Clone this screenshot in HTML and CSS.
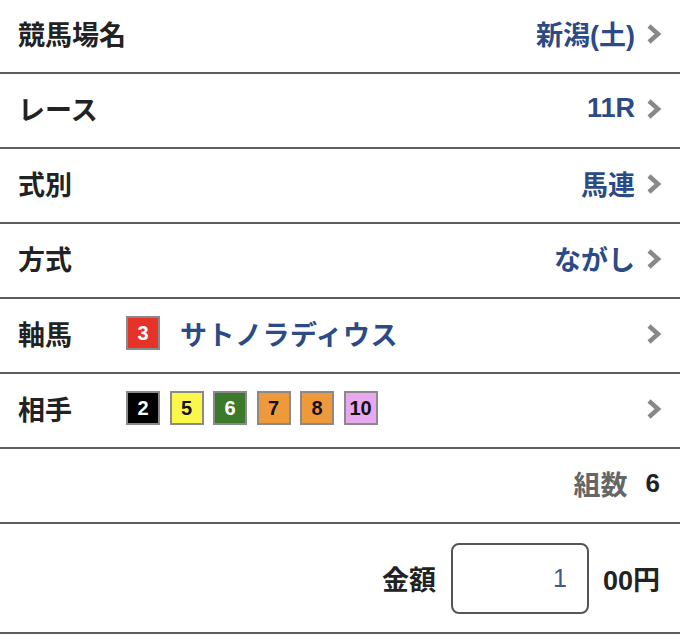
FILE: index.html
```html
<!DOCTYPE html>
<html lang="ja">
<head>
<meta charset="utf-8">
<link rel="stylesheet" href="styles.css">
</head>
<body>
<div class="list">
  <div class="row">
    <span class="label">競馬場名</span>
    <span class="value">新潟(土)</span>
    <svg class="chev" viewBox="0 0 16 22"><polyline points="3,3 12,11 3,19"/></svg>
  </div>
  <div class="row">
    <span class="label">レース</span>
    <span class="value">11R</span>
    <svg class="chev" viewBox="0 0 16 22"><polyline points="3,3 12,11 3,19"/></svg>
  </div>
  <div class="row">
    <span class="label">式別</span>
    <span class="value">馬連</span>
    <svg class="chev" viewBox="0 0 16 22"><polyline points="3,3 12,11 3,19"/></svg>
  </div>
  <div class="row">
    <span class="label">方式</span>
    <span class="value">ながし</span>
    <svg class="chev" viewBox="0 0 16 22"><polyline points="3,3 12,11 3,19"/></svg>
  </div>
  <div class="row">
    <span class="label label-fixed">軸馬</span>
    <div class="horses">
      <span class="badge b-red">3</span>
      <span class="horse-name">サトノラディウス</span>
    </div>
    <svg class="chev" viewBox="0 0 16 22"><polyline points="3,3 12,11 3,19"/></svg>
  </div>
  <div class="row">
    <span class="label label-fixed">相手</span>
    <div class="horses badges">
      <span class="badge b-black">2</span>
      <span class="badge b-yellow">5</span>
      <span class="badge b-green">6</span>
      <span class="badge b-orange">7</span>
      <span class="badge b-orange">8</span>
      <span class="badge b-pink">10</span>
    </div>
    <svg class="chev" viewBox="0 0 16 22"><polyline points="3,3 12,11 3,19"/></svg>
  </div>
  <div class="row row-end">
    <span class="count-label">組数</span>
    <span class="count">6</span>
  </div>
  <div class="row row-amount">
    <span class="amount-label">金額</span>
    <div class="amount-box">1</div>
    <span class="unit">00円</span>
  </div>
</div>
</body>
</html>
```
FILE: styles.css
```css
* { box-sizing: border-box; }
html, body {
  margin: 0;
  padding: 0;
  background: #fff;
}
body {
  font-family: "Liberation Sans", "Noto Sans CJK JP", sans-serif;
  color: #222;
  width: 680px;
  height: 640px;
  overflow: hidden;
}
.list {
  margin-top: -1px;
}
.row {
  display: flex;
  align-items: center;
  height: 75px;
  padding: 0 18px 5px 18px;
  border-bottom: 2px solid #5e5e5e;
}
.label {
  font-size: 27px;
  font-weight: bold;
  color: #222;
  flex: 1;
}
.label-fixed {
  flex: 0 0 108px;
}
.value {
  font-size: 27px;
  font-weight: bold;
  color: #2c4a85;
  margin-right: 11px;
}
.chev {
  width: 16px;
  height: 22px;
  flex: none;
  margin-top: 2px;
}
.chev polyline {
  fill: none;
  stroke: #888;
  stroke-width: 4.5;
  stroke-linecap: butt;
  stroke-linejoin: miter;
}
.horses {
  flex: 1;
  display: flex;
  align-items: center;
  gap: 20px;
}
.badges {
  gap: 9.5px;
}
.badge {
  width: 34px;
  height: 34px;
  border: 2px solid #8a8a8a;
  display: flex;
  align-items: center;
  justify-content: center;
  font-size: 20px;
  font-weight: bold;
  color: #fff;
  flex: none;
}
.b-red { background: #e5332a; }
.b-black { background: #000; }
.b-yellow { background: #fbf74a; color: #111; }
.b-green { background: #3a7a2a; }
.b-orange { background: #ee9a3c; color: #111; }
.b-pink { background: #e8a8ee; color: #111; }
.horse-name {
  font-size: 27px;
  font-weight: bold;
  color: #2c4a85;
  letter-spacing: 0.5px;
}
.row-end {
  justify-content: flex-end;
  padding-right: 20px;
}
.count-label {
  font-size: 27px;
  font-weight: bold;
  color: #666;
  margin-right: 18px;
}
.count {
  font-size: 26px;
  font-weight: bold;
  color: #222;
}
.row-amount {
  height: 110px;
  justify-content: flex-end;
  padding: 0 20px 0 18px;
}
.amount-label {
  font-size: 27px;
  font-weight: bold;
  color: #222;
  margin-right: 15px;
}
.amount-box {
  width: 138px;
  height: 71px;
  border: 2px solid #555;
  border-radius: 8px;
  display: flex;
  align-items: center;
  justify-content: flex-end;
  padding-right: 20px;
  font-size: 25px;
  color: #3b5a8f;
  margin-right: 14px;
}
.unit {
  font-size: 27px;
  font-weight: bold;
  color: #222;
}
```
